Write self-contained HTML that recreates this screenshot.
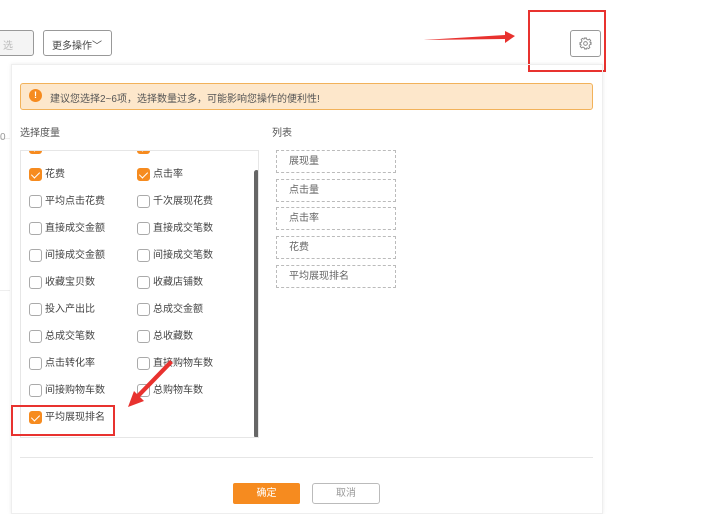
<!DOCTYPE html>
<html><head><meta charset="utf-8"><style>
*{margin:0;padding:0;box-sizing:border-box}
body{width:707px;height:508px;background:#fff;position:relative;overflow:hidden;font-family:"Liberation Sans","Noto Sans CJK SC",sans-serif;font-size:10px;color:#555}
.a{position:absolute}
.btn{position:absolute;border:1px solid #999;border-radius:3px;background:#fff}
.cb{position:absolute;width:13px;height:13px;border:1px solid #aaa;border-radius:3px;background:#fff}
.cb.on{background:#f68b1f;border-color:#f68b1f}
.cb.on:after{content:"";position:absolute;left:3px;top:1px;width:4px;height:7px;border:solid #fff;border-width:0 1.3px 1.3px 0;transform:rotate(45deg)}
.lbl{position:absolute;font-size:10px;color:#444;line-height:12px}
.it{position:absolute;left:276px;width:120px;height:23px;border:1px dashed #bbb;padding-left:12px;line-height:21px;font-size:10px;color:#666}
</style></head><body>
<div class="btn" style="left:-4px;top:30px;width:38px;height:26px;background:#f4f4f4"></div>
<div class="a" style="left:3px;top:37px;color:#bbb">选</div>
<div class="btn" style="left:43px;top:30px;width:69px;height:26px;padding:6px 0 0 8px;color:#444">更多操作﹀</div>
<div class="a" style="left:0;top:138px;width:10px;height:1px;background:#eee"></div>
<div class="a" style="left:0;top:290px;width:10px;height:1px;background:#eee"></div>
<div class="a" style="left:0;top:132px;color:#999">0</div>
<svg class="a" style="left:420px;top:28px" width="100" height="20"><polygon points="3,12 85,7 85,3 95,8 85,15 85,11" fill="#e8322f"/></svg>
<div class="a" style="left:528px;top:10px;width:78px;height:62px;border:2px solid #e8322f"></div>
<div class="btn" style="left:570px;top:30px;width:31px;height:27px;border-color:#999"></div>
<svg class="a" style="left:579px;top:37px" width="13" height="13" viewBox="0 0 14 14"><circle cx="7" cy="7" r="2" fill="none" stroke="#888" stroke-width="1"/><path d="M6 1h2l.4 1.6 1.4.6 1.4-.9 1.4 1.4-.9 1.4.6 1.4L13 6v2l-1.6.4-.6 1.4.9 1.4-1.4 1.4-1.4-.9-1.4.6L8 13H6l-.4-1.6-1.4-.6-1.4.9-1.4-1.4.9-1.4-.6-1.4L1 8V6l1.6-.4.6-1.4-.9-1.4 1.4-1.4 1.4.9 1.4-.6z" fill="none" stroke="#888" stroke-width="1"/></svg>
<div class="a" style="left:11px;top:64px;width:592px;height:450px;border:1px solid #eee;box-shadow:0 0 4px rgba(0,0,0,.08)"></div>
<div class="a" style="left:20px;top:83px;width:573px;height:27px;background:#fde7cb;border:1px solid #f2b25a;border-radius:3px"></div>
<div class="a" style="left:29px;top:89px;width:13px;height:13px;border-radius:50%;background:#f68b1f;color:#fff;font-size:9px;font-weight:bold;text-align:center;line-height:13px">!</div>
<div class="a" style="left:50px;top:90px;color:#555">建议您选择2~6项，选择数量过多，可能影响您操作的便利性!</div>
<div class="a" style="left:20px;top:124px;color:#555">选择度量</div>
<div class="a" style="left:272px;top:124px;color:#555">列表</div>
<div class="a" style="left:20px;top:150px;width:239px;height:288px;border:1px solid #e6e6e6;border-top:none;overflow:hidden">
<div style="position:absolute;left:0;top:0;width:100%;height:1px;background:#e6e6e6;z-index:2"></div>
<div class="a" style="left:233px;top:20px;width:5px;height:268px;background:#666;border-radius:3px"></div>
</div>
<div class="a" style="left:20px;top:150px;width:232px;height:288px;overflow:hidden">
<div class="cb on" style="left:9px;top:-9px"></div><div class="lbl" style="left:25px;top:-8px">展现量</div>
<div class="cb on" style="left:117px;top:-9px"></div><div class="lbl" style="left:133px;top:-8px">点击量</div>
</div>
<div id="rows"></div>
<script>
var r=[["花费","点击率",1,1],["平均点击花费","千次展现花费"],["直接成交金额","直接成交笔数"],["间接成交金额","间接成交笔数"],["收藏宝贝数","收藏店铺数"],["投入产出比","总成交金额"],["总成交笔数","总收藏数"],["点击转化率","直接购物车数"],["间接购物车数","总购物车数"],["平均展现排名","",1]];
var h="";r.forEach(function(x,i){var y=175+27*i;h+='<div class="cb'+(x[2]?' on':'')+'" style="left:29px;top:'+(y-7)+'px"></div><div class="lbl" style="left:45px;top:'+(y-6)+'px">'+x[0]+'</div>';if(x[1])h+='<div class="cb'+(x[3]?' on':'')+'" style="left:137px;top:'+(y-7)+'px"></div><div class="lbl" style="left:153px;top:'+(y-6)+'px">'+x[1]+'</div>';});
document.getElementById("rows").innerHTML=h;
</script>
<div class="it" style="top:150px">展现量</div>
<div class="it" style="top:179px">点击量</div>
<div class="it" style="top:207px">点击率</div>
<div class="it" style="top:236px">花费</div>
<div class="it" style="top:265px">平均展现排名</div>
<div class="a" style="left:11px;top:405px;width:104px;height:31px;border:2px solid #e8322f"></div>
<svg class="a" style="left:120px;top:355px" width="60" height="60"><polygon points="50,5 53,8 20,42 24,46 8,52 14,36 17,39" fill="#e8322f"/></svg>
<div class="a" style="left:20px;top:457px;width:573px;height:1px;background:#e6e6e6"></div>
<div class="a" style="left:233px;top:483px;width:67px;height:21px;background:#f68b1f;border-radius:2px;color:#fff;text-align:center;line-height:21px">确定</div>
<div class="a" style="left:312px;top:483px;width:68px;height:21px;border:1px solid #bbb;border-radius:3px;color:#999;text-align:center;line-height:19px">取消</div>
</body></html>
